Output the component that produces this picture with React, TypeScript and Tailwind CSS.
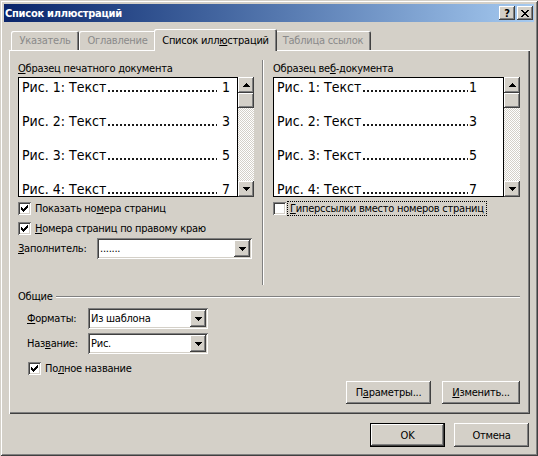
import React from "react";

const raised =
  "shadow-[inset_-1px_-1px_#404040,inset_1px_1px_#ffffff,inset_-2px_-2px_#808080,inset_2px_2px_#d4d0c8]";
const sunken =
  "shadow-[inset_1px_1px_#808080,inset_-1px_-1px_#ffffff,inset_2px_2px_#404040,inset_-2px_-2px_#d4d0c8]";

function U({ children }: { children: React.ReactNode }) {
  return <span className="underline underline-offset-[1px]">{children}</span>;
}

function CheckMark() {
  return (
    <svg width="7" height="7" viewBox="0 0 7 7" shapeRendering="crispEdges">
      <rect x="6" y="0" width="1" height="1" fill="#000" />
      <rect x="5" y="1" width="2" height="1" fill="#000" />
      <rect x="0" y="2" width="1" height="1" fill="#000" />
      <rect x="4" y="2" width="3" height="1" fill="#000" />
      <rect x="0" y="3" width="2" height="1" fill="#000" />
      <rect x="3" y="3" width="3" height="1" fill="#000" />
      <rect x="0" y="4" width="5" height="1" fill="#000" />
      <rect x="1" y="5" width="3" height="1" fill="#000" />
      <rect x="2" y="6" width="1" height="1" fill="#000" />
    </svg>
  );
}

function Check({ checked }: { checked?: boolean }) {
  return (
    <div className={`w-[13px] h-[13px] bg-white shrink-0 flex items-center justify-center ${sunken}`}>
      {checked && <CheckMark />}
    </div>
  );
}

function Tri({ up }: { up?: boolean }) {
  return (
    <svg width="7" height="4" viewBox="0 0 7 4" shapeRendering="crispEdges">
      {up ? (
        <path d="M3 0h1v1h1v1h1v1h1v1H0V3h1V2h1V1h1z" fill="#000" />
      ) : (
        <path d="M0 0h7v1H6v1H5v1H4v1H3V3H2V2H1V1H0z" fill="#000" />
      )}
    </svg>
  );
}

function ArrowBtn({ up }: { up?: boolean }) {
  return (
    <div className={`w-[16px] h-[16px] bg-[#d4d0c8] flex items-center justify-center shrink-0 ${raised}`}>
      <Tri up={up} />
    </div>
  );
}

function ScrollBar() {
  return (
    <div className="w-[16px] flex flex-col shrink-0">
      <ArrowBtn up />
      <div className={`h-[15px] bg-[#d4d0c8] shrink-0 ${raised}`} />
      <div className="flex-1 bg-[image:repeating-conic-gradient(#ffffff_0%_25%,#d4d0c8_0%_50%)] bg-[length:2px_2px]" />
      <ArrowBtn />
    </div>
  );
}

function Preview({ web }: { web?: boolean }) {
  const rows = [
    [1, 1],
    [2, 3],
    [3, 5],
    [4, 7],
  ];
  return (
    <div className="flex h-[120px] mt-[2px]">
      <div
        className={`flex-1 bg-white border border-black overflow-hidden pl-[3px] pt-[1px] text-[14px] leading-[16px] tracking-normal flex flex-col gap-[18px] ${
          web ? "pr-[26px]" : "pr-[7px]"
        }`}
      >
        {rows.map(([i, n]) => (
          <div key={i} className="flex whitespace-nowrap shrink-0 h-[16px]">
            <span>Рис. {i}: Текст</span>
            <span className="flex-1 ml-[2px] mr-[1px] bg-[image:linear-gradient(90deg,#1a1a1a_0_2px,transparent_2px)] bg-[length:4px_2px] bg-repeat-x bg-[position:0_11px]" />
            <span className={web ? "" : "pl-[4px]"}>{n}</span>
          </div>
        ))}
      </div>
      <ScrollBar />
    </div>
  );
}

function Combo({ className, text }: { className: string; text: string }) {
  return (
    <div className={`h-[21px] bg-white p-[2px] flex ${sunken} ${className}`}>
      <div className="flex-1 flex items-center pl-[1px] overflow-hidden whitespace-nowrap">{text}</div>
      <div className={`w-[16px] bg-[#d4d0c8] flex items-center justify-center ${raised}`}>
        <Tri />
      </div>
    </div>
  );
}

function Button({ className, children, def }: { className: string; children: React.ReactNode; def?: boolean }) {
  if (def) {
    return (
      <div className={`border border-black flex ${className}`}>
        <div className={`flex-1 flex items-center justify-center bg-[#d4d0c8] ${raised}`}>{children}</div>
      </div>
    );
  }
  return (
    <div className={`flex items-center justify-center bg-[#d4d0c8] ${raised} ${className}`}>{children}</div>
  );
}

const tabShadow = "shadow-[inset_1px_1px_#ffffff,inset_-1px_0_#404040,inset_-2px_0_#808080]";

export default function App() {
  return (
    <div
      className={`w-[538px] h-[456px] bg-[#d4d0c8] p-[4px] flex flex-col text-[11px] leading-[13px] tracking-[-0.25px] text-black font-['DejaVu_Sans_Condensed','DejaVu_Sans',sans-serif] ${"shadow-[inset_1px_1px_#d4d0c8,inset_-1px_-1px_#404040,inset_2px_2px_#ffffff,inset_-2px_-2px_#808080]"}`}
    >
      {/* Title bar */}
      <div className="h-[18px] shrink-0 flex items-center pl-[1px] pr-[1px] bg-linear-to-r from-[#0a246a] to-[#a6caf0]">
        <div className="flex-1 text-white font-bold">Список иллюстраций</div>
        <div className="flex gap-[2px]">
          <div className={`w-[16px] h-[14px] bg-[#d4d0c8] flex items-center justify-center font-bold text-[11px] leading-[11px] ${raised}`}>
            ?
          </div>
          <div className={`w-[16px] h-[14px] bg-[#d4d0c8] flex items-center justify-center ${raised}`}>
            <svg width="8" height="7" viewBox="0 0 8 7" shapeRendering="crispEdges">
              <path
                d="M0 0h2v1h1v1h2V1h1V0h2v1H7v1H6v1H5v1h1v1h1v1h1v1H6V6H5V5H3v1H2v1H0V6h1V5h1V4h1V3H2V2H1V1H0z"
                fill="#000"
              />
            </svg>
          </div>
        </div>
      </div>

      {/* Tabs */}
      <div className="mt-[7px] h-[21px] pl-[7px] flex items-end shrink-0 relative z-10">
        <div className={`w-[68px] h-[19px] rounded-t-[2px] flex items-center justify-center text-[#8a8a8a] ${tabShadow}`}>
          Указатель
        </div>
        <div className={`w-[77px] h-[19px] rounded-t-[2px] flex items-center justify-center text-[#8a8a8a] ${tabShadow}`}>
          Оглавление
        </div>
        <div
          className={`w-[123px] h-[22px] -mx-[2px] -mb-[1px] rounded-t-[2px] bg-[#d4d0c8] flex items-start pt-[5px] justify-center relative z-10 ${tabShadow}`}
        >
          <span>
            Список илл<U>ю</U>страций
          </span>
        </div>
        <div className={`w-[96px] h-[19px] rounded-t-[2px] flex items-center justify-center text-[#8a8a8a] ${tabShadow}`}>
          Таблица ссылок
        </div>
      </div>

      {/* Panel */}
      <div
        className={`ml-[5px] w-[521px] h-[364px] shrink-0 bg-[#d4d0c8] pl-[9px] pt-[12px] flex flex-col shadow-[inset_1px_1px_#ffffff,inset_-1px_-1px_#404040,inset_-2px_-2px_#808080]`}
      >
        <div className="flex">
          {/* Left column */}
          <div className="w-[236px] flex flex-col">
            <div className="h-[13px]">
              <U>О</U>бразец печатного документа
            </div>
            <Preview />
            <div className="mt-[5px] h-[13px] flex items-center gap-[4px]">
              <Check checked />
              <span>
                Показать но<U>м</U>ера страниц
              </span>
            </div>
            <div className="mt-[7px] h-[13px] flex items-center gap-[4px]">
              <Check checked />
              <span>
                <U>Н</U>омера страниц по правому краю
              </span>
            </div>
            <div className="mt-[3px] flex items-center">
              <div className="w-[79px]">
                <U>З</U>аполнитель:
              </div>
              <Combo className="w-[155px]" text="......." />
            </div>
          </div>

          {/* Separator */}
          <div className="ml-[8px] -mt-[2px] w-[2px] h-[225px] border-l border-l-[#808080] border-r border-r-white" />

          {/* Right column */}
          <div className="ml-[9px] w-[247px] flex flex-col">
            <div className="h-[13px]">
              Образец ве<U>б</U>-документа
            </div>
            <Preview web />
            <div className="mt-[4px] h-[15px] flex items-center gap-[1px]">
              <Check />
              <span className="border border-dotted border-black px-[2px] leading-[13px]">
                <U>Г</U>иперссылки вместо номеров страниц
              </span>
            </div>
          </div>
        </div>

        {/* Общие */}
        <div className="mt-[5px] h-[13px] flex items-center">
          <span>Общие</span>
          <div className="flex-1 ml-[4px] mr-[10px] h-[2px] border-t border-t-[#808080] border-b border-b-white" />
        </div>
        <div className="mt-[5px] ml-[9px] flex items-center">
          <div className="w-[61px]">
            <U>Ф</U>орматы:
          </div>
          <Combo className="w-[120px]" text="Из шаблона" />
        </div>
        <div className="mt-[4px] ml-[9px] flex items-center">
          <div className="w-[61px]">
            Наз<U>в</U>ание:
          </div>
          <Combo className="w-[120px]" text="Рис." />
        </div>
        <div className="mt-[8px] ml-[10px] h-[13px] flex items-center gap-[4px]">
          <Check checked />
          <span>
            По<U>л</U>ное название
          </span>
        </div>
        <div className="mt-[6px] pr-[10px] flex justify-end gap-[11px]">
          <Button className="w-[85px] h-[23px]">
            <span>
              П<U>а</U>раметры...
            </span>
          </Button>
          <Button className="w-[78px] h-[23px]">
            <span>
              <U>И</U>зменить...
            </span>
          </Button>
        </div>
      </div>

      {/* Bottom buttons */}
      <div className="mt-[9px] pr-[5px] flex justify-end gap-[9px]">
        <Button def className="w-[75px] h-[24px]">
          OK
        </Button>
        <Button className="w-[75px] h-[24px]">Отмена</Button>
      </div>
    </div>
  );
}
